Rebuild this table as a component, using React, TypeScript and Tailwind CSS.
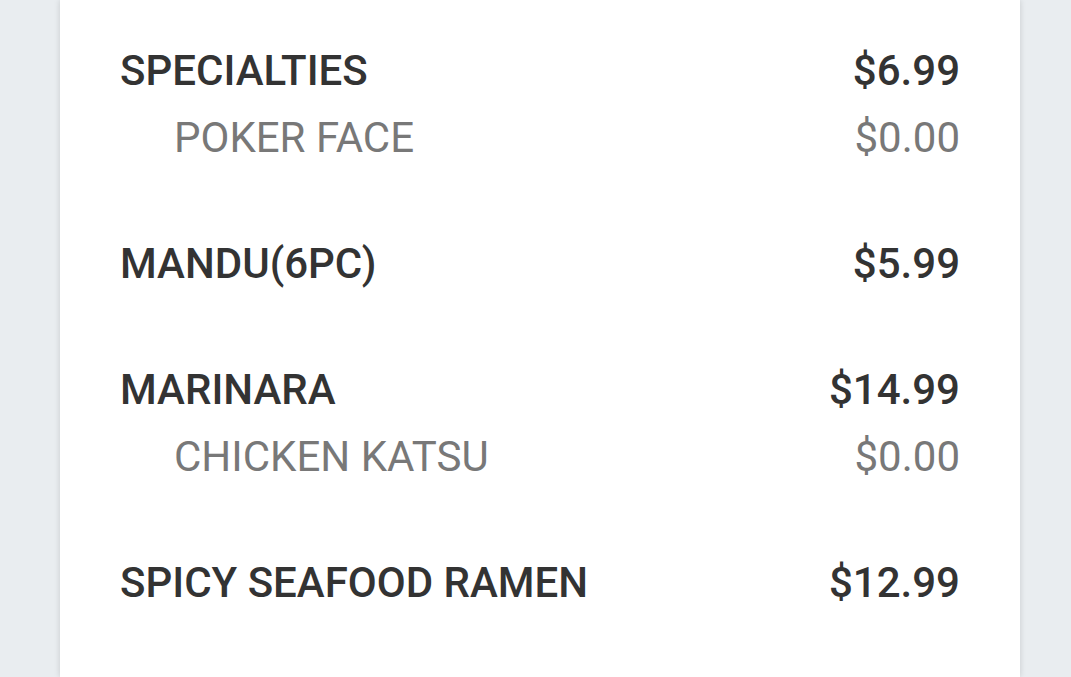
import React from "react";

type Item = { name: string; price: string; subs?: { name: string; price: string }[] };

const items: Item[] = [
  { name: "SPECIALTIES", price: "$6.99", subs: [{ name: "POKER FACE", price: "$0.00" }] },
  { name: "MANDU(6PC)", price: "$5.99" },
  { name: "MARINARA", price: "$14.99", subs: [{ name: "CHICKEN KATSU", price: "$0.00" }] },
  { name: "SPICY SEAFOOD RAMEN", price: "$12.99" },
];

export default function App() {
  return (
    <div
      className="w-[1071px] h-[677px] overflow-hidden bg-[#e9edf0] flex pl-[60px]"
      style={{ fontFamily: "Roboto, 'Noto Sans', sans-serif" }}
    >
      <div className="w-[960px] h-full bg-white shadow-[0_0_6px_rgba(0,0,0,0.15)] px-[60px] pt-[38px] flex flex-col gap-[60px]">
        {items.map((it) => (
          <div key={it.name} className="flex flex-col">
            <div className="flex justify-between text-[42px] leading-[66px] font-medium text-[#333333]">
              <span>{it.name}</span>
              <span>{it.price}</span>
            </div>
            {it.subs?.map((s) => (
              <div key={s.name} className="mt-[1px] flex justify-between text-[42px] leading-[66px] font-normal text-[#787878]">
                <span className="pl-[54px]">{s.name}</span>
                <span>{s.price}</span>
              </div>
            ))}
          </div>
        ))}
      </div>
    </div>
  );
}
